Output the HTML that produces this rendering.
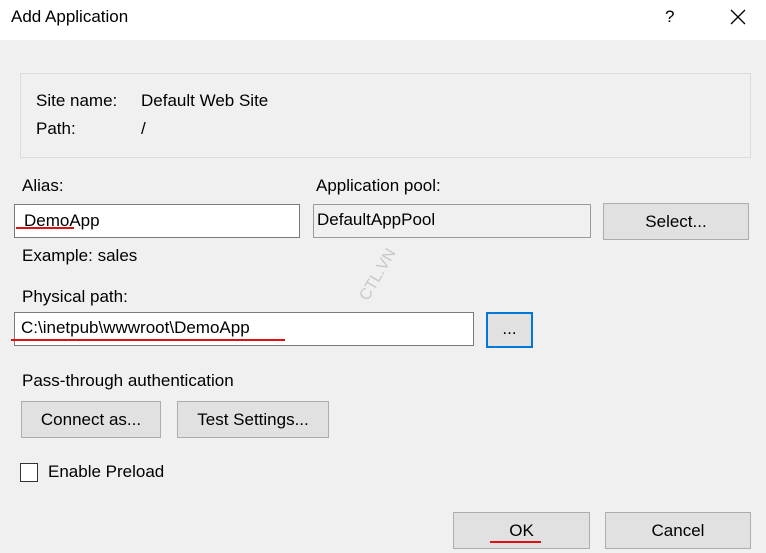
<!DOCTYPE html>
<html><head><style>
body{margin:0;width:766px;height:553px;background:#f0f0f0;font-family:"Liberation Sans",sans-serif;font-size:17px;color:#000;position:relative;overflow:hidden}
.a{position:absolute;white-space:nowrap;line-height:20px}
.box{position:absolute;box-sizing:border-box}
.btn{position:absolute;box-sizing:border-box;background:#e1e1e1;border:1px solid #adadad;text-align:center}
.red{position:absolute;height:2px;background:#e01010}
</style></head><body>
<div class="box" style="left:0;top:0;width:766px;height:40px;background:#fff"></div>
<div class="a" style="left:11px;top:7px;font-size:17px">Add Application</div>
<div class="a" style="left:665px;top:7px;font-size:17px">?</div>
<svg class="box" style="left:730px;top:9px" width="16" height="16"><path d="M1 1L15 15M15 1L1 15" stroke="#000" stroke-width="1.3"/></svg>

<div class="box" style="left:20px;top:73px;width:731px;height:85px;border:1px solid #dcdcdc"></div>
<div class="a" style="left:36px;top:91px">Site name:</div>
<div class="a" style="left:141px;top:91px">Default Web Site</div>
<div class="a" style="left:36px;top:119px">Path:</div>
<div class="a" style="left:141px;top:119px">/</div>

<div class="a" style="left:22px;top:176px">Alias:</div>
<div class="a" style="left:316px;top:176px">Application pool:</div>
<div class="box" style="left:14px;top:204px;width:286px;height:34px;background:#fff;border:1px solid #7a7a7a"></div>
<div class="a" style="left:24px;top:211px">DemoApp</div>
<div class="red" style="left:16px;top:227px;width:58px"></div>
<div class="box" style="left:313px;top:204px;width:278px;height:34px;background:#f0f0f0;border:1px solid #9a9a9a"></div>
<div class="a" style="left:317px;top:210px">DefaultAppPool</div>
<div class="btn" style="left:603px;top:203px;width:146px;height:37px;line-height:35px">Select...</div>

<div class="a" style="left:22px;top:246px">Example: sales</div>
<div class="a" style="left:22px;top:287px">Physical path:</div>
<div class="box" style="left:14px;top:312px;width:460px;height:34px;background:#fff;border:1px solid #7a7a7a"></div>
<div class="a" style="left:21px;top:318px">C:\inetpub\wwwroot\DemoApp</div>
<div class="red" style="left:11px;top:339px;width:274px"></div>
<div class="btn" style="left:486px;top:312px;width:47px;height:36px;border:2px solid #0078d7;line-height:30px">...</div>

<div class="a" style="left:22px;top:371px">Pass-through authentication</div>
<div class="btn" style="left:21px;top:401px;width:140px;height:37px;line-height:35px">Connect as...</div>
<div class="btn" style="left:177px;top:401px;width:152px;height:37px;line-height:35px">Test Settings...</div>

<div class="box" style="left:20px;top:463px;width:18px;height:19px;background:#fff;border:1px solid #333"></div>
<div class="a" style="left:48px;top:462px">Enable Preload</div>

<div class="btn" style="left:453px;top:512px;width:137px;height:37px;line-height:35px">OK</div>
<div class="red" style="left:490px;top:541px;width:51px"></div>
<div class="btn" style="left:605px;top:512px;width:146px;height:37px;line-height:35px">Cancel</div>

<div class="a" style="left:350px;top:265px;color:#c8c8c8;font-size:16px;transform:rotate(-60deg);transform-origin:center">CTL.VN</div>
</body></html>
